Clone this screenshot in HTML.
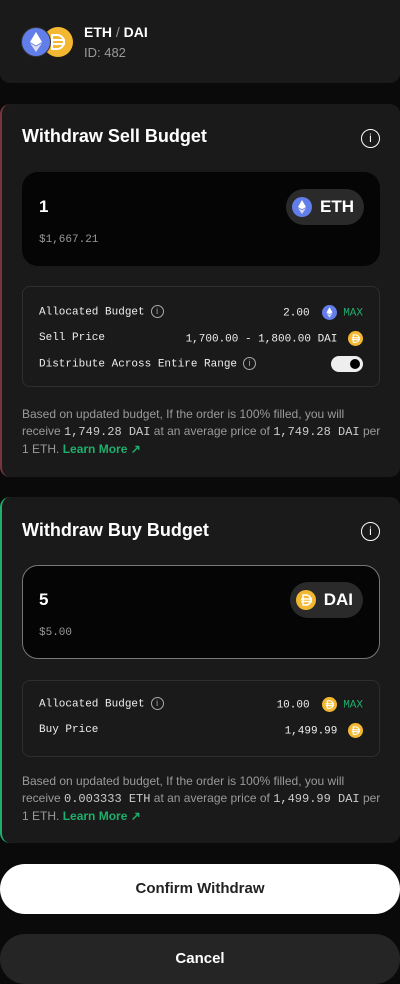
<!DOCTYPE html>
<html><head><meta charset="utf-8"><style>
*{box-sizing:border-box;margin:0;padding:0}
body{width:400px;height:984px;background:#0a0a0a;font-family:"Liberation Sans",sans-serif;color:#fff;position:relative;overflow:hidden}
.abs{position:absolute}
.card{position:absolute;left:0;width:400px;background:#1a1a1a;border-radius:10px}
.mono{font-family:"Liberation Mono",monospace}
.h{font-weight:bold;font-size:18px}
.info{position:absolute;width:19px;height:19px;border:1.5px solid #fff;border-radius:50%;font-size:12px;text-align:center;line-height:16px;font-family:"Liberation Sans",sans-serif}
.sinfo{display:inline-block;width:13px;height:13px;border:1px solid #aaa;border-radius:50%;font-size:9px;text-align:center;line-height:11px;color:#aaa;vertical-align:middle;margin-left:6px;font-family:"Liberation Sans",sans-serif}
.inp{position:absolute;left:22px;width:358px;height:94px;background:#050505;border-radius:16px}
.pill{position:absolute;right:16px;top:18px;height:36px;border-radius:18px;background:#2a2a2a;padding:0 10px 0 6px;display:flex;align-items:center;font-weight:bold;font-size:17px}
.eth{width:20px;height:20px;border-radius:50%;background:#627eea;display:inline-block;position:relative;vertical-align:middle}
.dai{width:20px;height:20px;border-radius:50%;background:#f4b731;display:inline-block;position:relative;vertical-align:middle}
.eth svg,.dai svg{position:absolute;left:0;top:0;width:100%;height:100%}
.box{position:absolute;left:22px;width:358px;border:1.5px solid #2e2e2e;border-radius:8px}
.row{position:absolute;left:16px;right:16px;font-family:"Liberation Mono",monospace;font-size:11px;color:#eee;display:flex;justify-content:space-between;align-items:center;height:18px}
.txt{position:absolute;left:22px;width:360px;font-size:12px;line-height:17px;color:#9a9a9a}
.txt b{font-family:"Liberation Mono",monospace;font-weight:normal;color:#ccc}
.lm{color:#1fae6c;font-weight:bold}
.btn{position:absolute;left:0;width:400px;height:50px;border-radius:25px;text-align:center;line-height:50px;font-weight:bold;font-size:15px}
</style></head><body>
<svg width="0" height="0" style="position:absolute"><defs>
<symbol id="e" viewBox="0 0 20 20"><path d="M10 3L6 10l4 2.3 4-2.3z" fill="#fff"/><path d="M10 13.2L6 11l4 6 4-6z" fill="#dde"/></symbol>
<symbol id="d" viewBox="0 0 20 20"><g stroke="#fff" stroke-width="1.5" fill="none"><path d="M7 5h3a5 5 0 0 1 0 10H7z"/><path d="M5 9h11M5 11.5h11"/></g></symbol>
</defs></svg>
<div class="card" style="top:-10px;height:93px"></div>
<div class="abs" style="top:27px;width:30px;height:30px;border-radius:50%;background:#f4b731;left:43px"></div>
<svg class="abs" style="left:47px;top:33px" width="22" height="18"><g stroke="#fff" stroke-width="2" fill="none"><path d="M5 2h5a7 7 0 0 1 0 14H5z"/><path d="M2 7h16M2 11h16"/></g></svg>
<div class="abs" style="left:21px;top:27px;width:30px;height:30px;border-radius:50%;background:#627eea;border:1px solid #333"></div>
<svg class="abs" style="left:29px;top:31px" width="14" height="22"><path d="M7 1L1 11l6 3.5 6-3.5z" fill="#fff"/><path d="M7 15.5L1 12l6 9 6-9z" fill="#dde"/></svg>
<div class="abs" style="left:84px;top:24px;font-size:14px;font-weight:bold">ETH <span style="color:#999;font-weight:normal">/</span> DAI</div>
<div class="abs" style="left:84px;top:45px;font-size:13px;color:#999">ID: 482</div>

<div class="card" style="top:104px;height:373px;border-left:2px solid #7a3440"></div>
<div class="abs h" style="left:22px;top:126px">Withdraw Sell Budget</div>
<div class="info" style="left:361px;top:129px">i</div>
<div class="inp" style="top:172px">
 <div class="abs" style="left:17px;top:25px;font-size:17px;font-weight:bold">1</div>
 <div class="abs mono" style="left:17px;top:62px;font-size:11px;color:#999">$1,667.21</div>
 <div class="pill" style="top:17px"><span class="eth" style="margin-right:8px"><svg><use href="#e"/></svg></span>ETH</div>
</div>
<div class="box" style="top:286px;height:101px">
 <div class="row" style="top:16px"><span>Allocated Budget<span class="sinfo">i</span></span><span>2.00 <span class="eth" style="width:15px;height:15px;margin:0 6px"><svg><use href="#e"/></svg></span><span style="color:#1fae6c">MAX</span></span></div>
 <div class="row" style="top:42px"><span>Sell Price</span><span>1,700.00 - 1,800.00 DAI <span class="dai" style="width:15px;height:15px;margin-left:4px"><svg><use href="#d"/></svg></span></span></div>
 <div class="row" style="top:68px"><span>Distribute Across Entire Range<span class="sinfo">i</span></span><span style="width:32px;height:16px;border-radius:8px;background:#eee;position:relative"><span style="position:absolute;right:3px;top:3px;width:10px;height:10px;border-radius:50%;background:#000"></span></span></div>
</div>
<div class="txt" style="top:406px">Based on updated budget, If the order is 100% filled, you will receive <b>1,749.28 DAI</b> at an average price of <b>1,749.28 DAI</b> per 1 ETH. <span class="lm">Learn More ↗</span></div>

<div class="card" style="top:497px;height:346px;border-left:2px solid #1fae6c"></div>
<div class="abs h" style="left:22px;top:520px">Withdraw Buy Budget</div>
<div class="info" style="left:361px;top:522px">i</div>
<div class="inp" style="top:565px;border:1px solid #777">
 <div class="abs" style="left:16px;top:24px;font-size:17px;font-weight:bold">5</div>
 <div class="abs mono" style="left:16px;top:61px;font-size:11px;color:#999">$5.00</div>
 <div class="pill" style="top:16px"><span class="dai" style="margin-right:8px"><svg><use href="#d"/></svg></span>DAI</div>
</div>
<div class="box" style="top:680px;height:77px">
 <div class="row" style="top:14px"><span>Allocated Budget<span class="sinfo">i</span></span><span>10.00 <span class="dai" style="width:15px;height:15px;margin:0 6px"><svg><use href="#d"/></svg></span><span style="color:#1fae6c">MAX</span></span></div>
 <div class="row" style="top:40px"><span>Buy Price</span><span>1,499.99 <span class="dai" style="width:15px;height:15px;margin-left:4px"><svg><use href="#d"/></svg></span></span></div>
</div>
<div class="txt" style="top:773px">Based on updated budget, If the order is 100% filled, you will receive <b>0.003333 ETH</b> at an average price of <b>1,499.99 DAI</b> per 1 ETH. <span class="lm">Learn More ↗</span></div>

<div class="btn" style="top:864px;background:#fff;color:#222">Confirm Withdraw</div>
<div class="btn" style="top:934px;background:#252525;color:#fff">Cancel</div>
</body></html>
